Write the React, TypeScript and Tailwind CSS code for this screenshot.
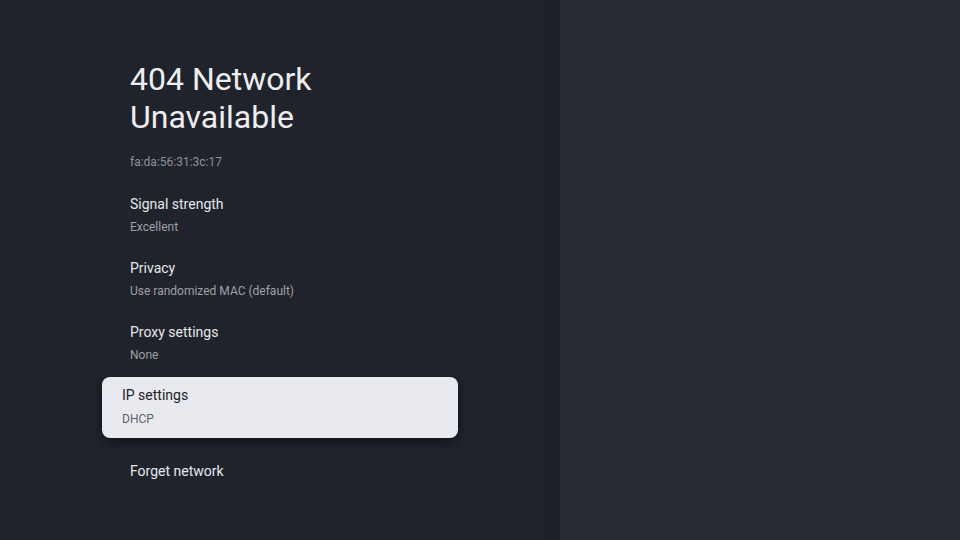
import React from 'react';

interface Row {
  title: string;
  value?: string;
}

const rows: Row[] = [
  { title: 'Signal strength', value: 'Excellent' },
  { title: 'Privacy', value: 'Use randomized MAC (default)' },
  { title: 'Proxy settings', value: 'None' },
];

const font = { fontFamily: 'Roboto, "Noto Sans", sans-serif' };

const SettingRow: React.FC<Row> = ({ title, value }) => (
  <div className="h-[64px]">
    <div className="text-[14px] leading-[20px] text-[#e6e8eb]">{title}</div>
    {value && (
      <div className="mt-[5px] text-[12px] leading-[16px] text-[#9ea2a8]">{value}</div>
    )}
  </div>
);

export default function App() {
  return (
    <div className="flex h-[540px] w-[960px] overflow-hidden" style={font}>
      <div className="flex h-full w-[560px] flex-col bg-[linear-gradient(to_right,#20232b_96%,#1c1f26)] pl-[130px] pt-[60px]">
        <h1 className="text-[32px] font-normal leading-[38px] text-[#eceef1]">
          404 Network
          <br />
          Unavailable
        </h1>
        <div className="mt-[18px] text-[12px] leading-[16px] text-[#8e9298]">fa:da:56:31:3c:17</div>

        <div className="mt-[24px] flex flex-col">
          {rows.map((r) => (
            <SettingRow key={r.title} {...r} />
          ))}
        </div>

        <div className="-ml-[28px] mt-[-9px] w-[356px] rounded-[8px] bg-[#e8eaef] pb-[11px] pl-[20px] pt-[8px] shadow-[0_4px_12px_rgba(0,0,0,0.45)]">
          <div className="text-[14px] leading-[20px] text-[#202328]">IP settings</div>
          <div className="mt-[6px] text-[12px] leading-[16px] text-[#5f6368]">DHCP</div>
        </div>

        <div className="mt-[23px] text-[14px] leading-[20px] text-[#e6e8eb]">Forget network</div>
      </div>
      <div className="h-full flex-1 bg-[#262a33]" />
    </div>
  );
}
